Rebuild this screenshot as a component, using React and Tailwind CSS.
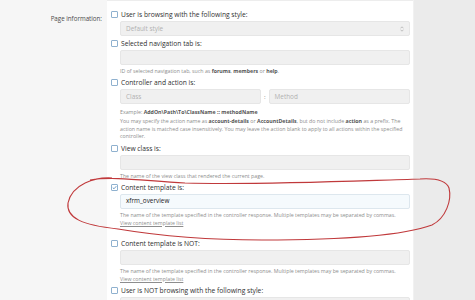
import React from 'react';

const font = { fontFamily: '"Open Sans", "Noto Sans", sans-serif' };

function Check({ checked }) {
  return (
    <span className="w-[7px] h-[7px] shrink-0 border border-[#8fb1cf] bg-white rounded-[1px] flex items-center justify-center">
      {checked && (
        <svg width="5" height="5" viewBox="0 0 10 10">
          <path d="M1.5 5.2 L4 7.6 L8.6 2.4" fill="none" stroke="#4f86b8" strokeWidth="1.6" />
        </svg>
      )}
    </span>
  );
}

function OptionRow({ checked, label, className }) {
  return (
    <div className={`flex items-center h-[9px] pl-[4px] gap-[3px] ${className}`}>
      <Check checked={checked} />
      <span className="text-[6.7px] leading-[9px] text-[#2f2f2f] whitespace-nowrap">{label}</span>
    </div>
  );
}

function Field({ value, placeholder, active, className = '', children }) {
  return (
    <div
      className={`h-[15px] rounded-[2px] border flex items-center px-[5px] text-[6.4px] whitespace-nowrap ${
        active ? 'bg-[#f5fafd] border-[#dde7ee] text-[#222]' : 'bg-[#f0f0f0] border-[#e6e6e6] text-[#b0b0b0]'
      } ${className}`}
    >
      <span className="flex-1">{value || placeholder}</span>
      {children}
    </div>
  );
}

function Hint({ children, className = '' }) {
  return (
    <div className={`text-[5.25px] leading-[8px] text-[#8d8d8d] whitespace-nowrap ${className}`}>{children}</div>
  );
}

export default function App() {
  return (
    <div className="w-[475px] h-[300px] overflow-hidden bg-[#ebebeb] flex relative" style={font}>
      <div className="w-[107px] shrink-0 bg-[#f6f6f6] flex flex-col items-end pr-[5px]">
        <div className="mt-[14px] h-[9px] text-[6.2px] leading-[9px] text-[#4a4a4a] whitespace-nowrap">Page information:</div>
      </div>
      <div className="w-[307px] shrink-0 bg-white flex flex-col border-r border-[#f1f1f1]">
        <div className="h-[5px] border-b border-[#ededed]" />
        <div className="flex flex-col pr-[3px]">
          <OptionRow label="User is browsing with the following style:" className="mt-[9px]" />
          <div className="pl-[13px] mt-[2px]">
            <Field placeholder="Default style">
              <svg width="4" height="6" viewBox="0 0 4 6">
                <path d="M0.5 2.3 L2 0.8 L3.5 2.3 M0.5 3.7 L2 5.2 L3.5 3.7" fill="none" stroke="#a8a8a8" strokeWidth="0.7" />
              </svg>
            </Field>
          </div>

          <OptionRow label="Selected navigation tab is:" className="mt-[3px]" />
          <div className="pl-[13px] mt-[2px]">
            <Field />
            <Hint className="mt-[2px]">
              ID of selected navigation tab, such as <b className="text-[#555]">forums</b>, <b className="text-[#555]">members</b> or <b className="text-[#555]">help</b>.
            </Hint>
          </div>

          <OptionRow label="Controller and action is:" className="mt-[3px]" />
          <div className="pl-[13px] mt-[2px]">
            <div className="flex items-center gap-[3px]">
              <Field placeholder="Class" className="w-[141px] h-[14px]" />
              <span className="text-[6px] text-[#777] leading-[14px]">:</span>
              <Field placeholder="Method" className="flex-1 h-[14px]" />
            </div>
            <Hint className="mt-[4px]">
              Example: <b className="text-[#555]">AddOn\Path\To\ClassName :: methodName</b>
            </Hint>
            <div className="mt-[2px] text-[5.25px] leading-[7.5px] text-[#8d8d8d] whitespace-nowrap">
              <div>
                You may specify the action name as <b className="text-[#555]">account-details</b> or <b className="text-[#555]">AccountDetails</b>, but do not include <b className="text-[#555]">action</b> as a prefix. The
              </div>
              <div>action name is matched case insensitively. You may leave the action blank to apply to all actions within the specified</div>
              <div>controller.</div>
            </div>
          </div>

          <OptionRow label="View class is:" className="mt-[3px]" />
          <div className="pl-[13px] mt-[2px]">
            <Field />
            <Hint className="mt-[2px]">The name of the view class that rendered the current page.</Hint>
          </div>

          <OptionRow checked label="Content template is:" className="mt-[3px]" />
          <div className="pl-[13px] mt-[2px]">
            <Field active value="xfrm_overview" />
            <Hint className="mt-[2px]">
              The name of the template specified in the controller response. Multiple templates may be separated by commas.
            </Hint>
            <Hint className="underline">View content template list</Hint>
          </div>

          <OptionRow label="Content template is NOT:" className="mt-[12px]" />
          <div className="pl-[13px] mt-[2px]">
            <Field />
            <Hint className="mt-[2px]">
              The name of the template specified in the controller response. Multiple templates may be separated by commas.
            </Hint>
            <Hint className="underline">View content template list</Hint>
          </div>

          <OptionRow label="User is NOT browsing with the following style:" className="mt-[3px]" />
          <div className="pl-[13px] mt-[2px]">
            <Field placeholder="Default style" />
          </div>
        </div>
      </div>
      <div className="flex-1" />

      <svg className="absolute left-0 top-0 pointer-events-none" width="475" height="300" viewBox="0 0 475 300">
        <path
          d="M112 178 C 95 177, 72 184, 68 203 C 66 218, 82 225, 118 229 C 160 236, 205 240, 262 240 C 340 240, 402 236, 432 225 C 446 218, 452 200, 449 188 C 446 180, 436 178, 420 179 C 350 181, 260 185, 185 183 C 145 181, 115 176, 90 180"
          fill="none"
          stroke="#c0393b"
          strokeWidth="1.1"
        />
      </svg>
    </div>
  );
}
